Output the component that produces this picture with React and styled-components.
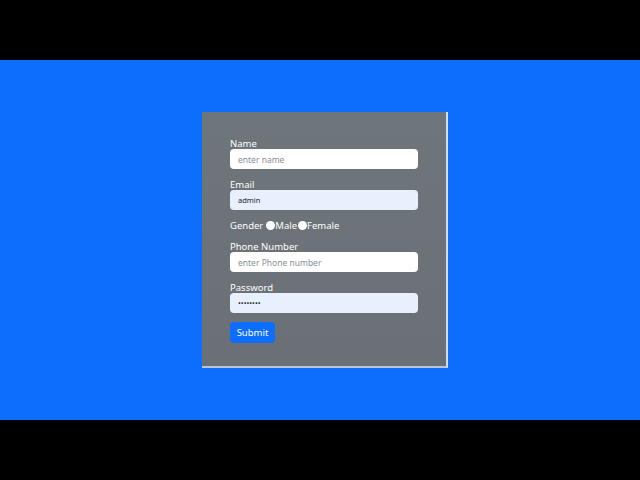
import styled, { createGlobalStyle } from "styled-components"

const Global = createGlobalStyle`
  html, body { margin:0; padding:0; background:#000; }
  body { font-family:"Noto Sans","Open Sans",sans-serif; }
`
const Screen = styled.div`
  width:640px;
  height:480px;
  display:flex;
  flex-direction:column;
  background:#000;
`
const Stage = styled.div`
  margin-top:60px;
  height:360px;
  background:#0d6efd;
  display:flex;
  justify-content:center;
  align-items:flex-start;
  padding-top:52px;
  box-sizing:border-box;
`
const Card = styled.form`
  width:246px;
  height:256px;
  box-sizing:border-box;
  background:linear-gradient(180deg,#6e757b 0%,#6a7076 100%);
  border-right:2px solid #d5dde8;
  border-bottom:2px solid #b9c6da;
  padding:26px 28px 0 28px;
  margin-left:10px;
  display:flex;
  flex-direction:column;
`
const Field = styled.div`
  display:flex;
  flex-direction:column;
  margin-bottom:${p => p.$gap || 10}px;
`
const Label = styled.label`
  color:#fff;
  font-size:9.5px;
  line-height:11px;
`
const Input = styled.input`
  width:188px;
  height:20px;
  box-sizing:border-box;
  border:none;
  border-radius:4px;
  padding:0 8px;
  font-family:inherit;
  font-size:${p => p.$filled ? 7.5 : 8.5}px;
  color:#222;
  background:${p => p.$filled ? "#e8f0fe" : "#fff"};
  outline:none;
  &::placeholder { color:#8a8f95; }
`
const GenderRow = styled.div`
  display:flex;
  align-items:center;
  color:#fff;
  font-size:9.5px;
  margin:0 0 10px 0;
  height:12px;
`
const Radio = styled.span`
  display:inline-block;
  width:9px;
  height:9px;
  border-radius:50%;
  background:#fff;
  margin-left:${p => p.$first ? 3 : 1}px;
`
const Actions = styled.div`
  display:flex;
`
const Button = styled.button`
  width:45px;
  height:21px;
  border:none;
  border-radius:4px;
  background:#0d6efd;
  color:#fff;
  font-family:inherit;
  font-size:9.5px;
  padding:0;
`

export default function App() {
  return (
    <Screen>
      <Global />
      <Stage>
        <Card onSubmit={e => e.preventDefault()}>
          <Field>
            <Label>Name</Label>
            <Input placeholder="enter name" />
          </Field>
          <Field $gap={9}>
            <Label>Email</Label>
            <Input $filled defaultValue="admin" />
          </Field>
          <GenderRow>
            Gender<Radio $first />Male<Radio />Female
          </GenderRow>
          <Field $gap={10}>
            <Label>Phone Number</Label>
            <Input placeholder="enter Phone number" />
          </Field>
          <Field $gap={9}>
            <Label>Password</Label>
            <Input $filled type="password" defaultValue="adminpwd" />
          </Field>
          <Actions>
            <Button type="submit">Submit</Button>
          </Actions>
        </Card>
      </Stage>
    </Screen>
  )
}
